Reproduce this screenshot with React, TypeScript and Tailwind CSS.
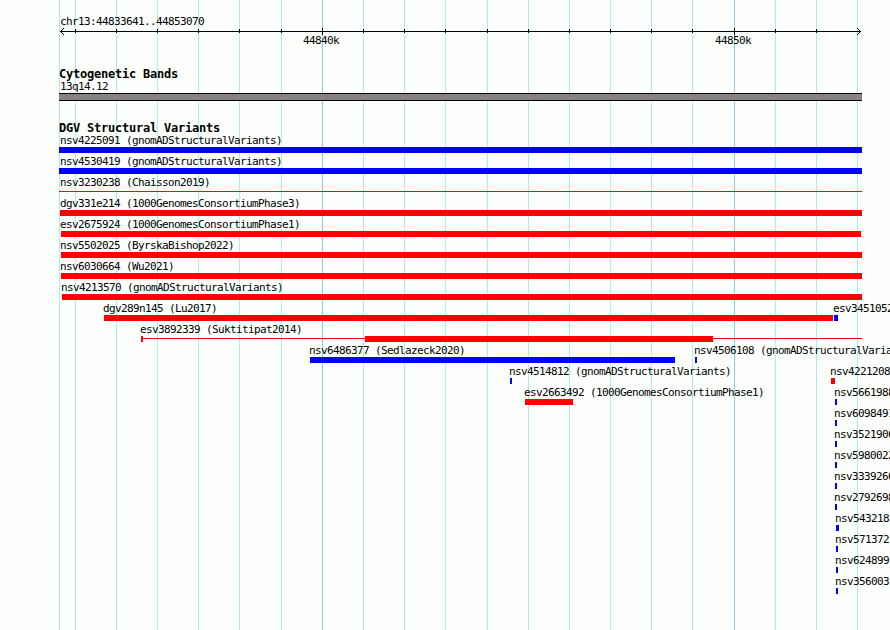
type Feature = {
  id: string;
  study?: string;
  // pixel extents of the thick part of the glyph
  start: number;
  end: number;
  color: 'blue' | 'red';
  labelX?: number;
};

const LEFT = 59;
const RIGHT = 862;

const MINOR_TICKS = [75, 116, 157, 198, 239, 281, 363, 404, 445, 487, 528, 569, 610, 651, 692, 775, 816, 857];
const MAJOR_TICKS = [
  { x: 322, label: '44840k' },
  { x: 734, label: '44850k' },
];

const ROWS: Feature[][] = [
  [{ id: 'nsv4225091', study: 'gnomADStructuralVariants', start: 59, end: 862, color: 'blue', labelX: 60 }],
  [{ id: 'nsv4530419', study: 'gnomADStructuralVariants', start: 59, end: 862, color: 'blue', labelX: 60 }],
  [{ id: 'nsv3230238', study: 'Chaisson2019', start: 59, end: 59, color: 'red', labelX: 60 }],
  [{ id: 'dgv331e214', study: '1000GenomesConsortiumPhase3', start: 60, end: 862, color: 'red', labelX: 60 }],
  [{ id: 'esv2675924', study: '1000GenomesConsortiumPhase1', start: 61, end: 861, color: 'red' }],
  [{ id: 'nsv5502025', study: 'ByrskaBishop2022', start: 61, end: 862, color: 'red' }],
  [{ id: 'nsv6030664', study: 'Wu2021', start: 61, end: 862, color: 'red' }],
  [{ id: 'nsv4213570', study: 'gnomADStructuralVariants', start: 62, end: 862, color: 'red' }],
  [
    { id: 'dgv289n145', study: 'Lu2017', start: 104, end: 833, color: 'red' },
    { id: 'esv3451052', start: 834, end: 838, color: 'blue' },
  ],
  [{ id: 'esv3892339', study: 'Suktitipat2014', start: 365, end: 713, color: 'red', labelX: 140 }],
  [
    { id: 'nsv6486377', study: 'Sedlazeck2020', start: 310, end: 675, color: 'blue' },
    { id: 'nsv4506108', study: 'gnomADStructuralVariants', start: 695, end: 697, color: 'blue', labelX: 694 },
  ],
  [
    { id: 'nsv4514812', study: 'gnomADStructuralVariants', start: 510, end: 512, color: 'blue' },
    { id: 'nsv4221208', start: 831, end: 835, color: 'red' },
  ],
  [
    { id: 'esv2663492', study: '1000GenomesConsortiumPhase1', start: 525, end: 573, color: 'red' },
    { id: 'nsv5661988', start: 835, end: 837, color: 'blue' },
  ],
  [{ id: 'nsv6098491', start: 835, end: 837, color: 'blue' }],
  [{ id: 'nsv3521906', start: 835, end: 837, color: 'blue' }],
  [{ id: 'nsv5980022', start: 835, end: 837, color: 'blue' }],
  [{ id: 'nsv3339266', start: 835, end: 837, color: 'blue' }],
  [{ id: 'nsv2792698', start: 835, end: 837, color: 'blue' }],
  [{ id: 'nsv543218', start: 836, end: 839, color: 'blue' }],
  [{ id: 'nsv571372', start: 836, end: 838, color: 'blue' }],
  [{ id: 'nsv624899', start: 836, end: 838, color: 'blue' }],
  [{ id: 'nsv356003', start: 836, end: 838, color: 'blue' }],
];

// thin connector lines, keyed by id
const CONNECTORS: Record<string, { start: number; end: number; cap?: boolean }> = {
  nsv3230238: { start: LEFT, end: RIGHT },
  esv3892339: { start: 141, end: RIGHT, cap: true },
};

function Label({ x, children }: { x: number; children: React.ReactNode }) {
  return (
    <span
      className="col-start-1 row-start-1 h-[13px] whitespace-pre text-[11px] leading-[13px] tracking-[-0.622px]"
      style={{ marginLeft: x }}
    >
      {children}
    </span>
  );
}

function Bar({ start, end, className }: { start: number; end: number; className: string }) {
  return (
    <span
      className={`col-start-1 row-start-2 block ${className}`}
      style={{ marginLeft: start, width: end - start }}
    />
  );
}

function FeatureGlyph({ feature }: { feature: Feature }) {
  const { id, study, start, end, color, labelX } = feature;
  const line = CONNECTORS[id];
  return (
    <>
      <Label x={labelX ?? start - 1}>{study ? `${id} (${study})` : id}</Label>
      {line && <Bar start={line.start} end={line.end} className="mt-[2px] h-px bg-[#ff0000]" />}
      {line?.cap && <Bar start={line.start} end={line.start + 2} className="h-[6px] bg-[#ff0000]" />}
      <Bar start={start} end={end} className={color === 'blue' ? 'h-[6px] bg-[#0000ff]' : 'h-[6px] bg-[#ff0000]'} />
    </>
  );
}

function GridLines() {
  return (
    <div className="col-start-1 row-start-1 grid h-[630px] w-[890px] grid-cols-[890px]">
      {[LEFT, ...MINOR_TICKS].map((x) => (
        <span key={x} className="col-start-1 row-start-1 w-px bg-[#afeeee]" style={{ marginLeft: x }} />
      ))}
      {MAJOR_TICKS.map(({ x }) => (
        <span key={x} className="col-start-1 row-start-1 w-px bg-[#87ceeb]" style={{ marginLeft: x }} />
      ))}
    </div>
  );
}

function Ruler() {
  return (
    <svg width="890" height="7" className="block" shapeRendering="crispEdges" aria-hidden="true">
      <rect x="60" y="3" width="801" height="1" />
      {MINOR_TICKS.slice(0, -1).map((x) => (
        <rect key={x} x={x} y="1" width="1" height="4" />
      ))}
      {MAJOR_TICKS.map(({ x }) => (
        <rect key={x} x={x} y="0" width="1" height="7" />
      ))}
      {[1, 2, 3].map((d) => (
        <g key={d}>
          <rect x={60 + d} y={3 - d} width="1" height="1" />
          <rect x={60 + d} y={3 + d} width="1" height="1" />
          <rect x={860 - d} y={3 - d} width="1" height="1" />
          <rect x={860 - d} y={3 + d} width="1" height="1" />
        </g>
      ))}
    </svg>
  );
}

function TrackTitle({ children }: { children: React.ReactNode }) {
  return (
    <h2 className="ml-[59px] h-[12px] whitespace-pre text-[12px] font-bold leading-[13px] tracking-[-0.225px]">
      {children}
    </h2>
  );
}

export default function App() {
  return (
    <main className="grid h-[630px] w-[890px] grid-cols-[890px] overflow-hidden bg-[#fdfffd] font-['DejaVu_Sans_Mono',monospace] text-black">
      <GridLines />

      <div className="col-start-1 row-start-1 flex h-[630px] w-[890px] flex-col overflow-hidden pt-[15px]">
        {/* Coordinates */}
        <div className="grid grid-cols-[890px]">
          <Label x={60}>chr13:44833641..44853070</Label>
        </div>
        <Ruler />
        <div className="-mt-px grid grid-cols-[890px]">
          {MAJOR_TICKS.map(({ x, label }) => (
            <Label key={x} x={x - 19}>{label}</Label>
          ))}
        </div>

        {/* Cytogenetic bands */}
        <section className="mt-[21px]">
          <TrackTitle>Cytogenetic Bands</TrackTitle>
          <div className="grid grid-cols-[890px]">
            <Label x={60}>13q14.12</Label>
          </div>
          <div className="ml-[59px] h-[8px] w-[803px] border-y border-black bg-[#868286]" />
        </section>

        {/* Structural variants */}
        <section className="mt-[21px]">
          <TrackTitle>DGV Structural Variants</TrackTitle>
          {ROWS.map((row) => (
            <div key={row[0].id} className="grid h-[21px] grid-cols-[890px] grid-rows-[13px_6px]">
              {row.map((feature) => (
                <FeatureGlyph key={feature.id} feature={feature} />
              ))}
            </div>
          ))}
        </section>
      </div>
    </main>
  );
}
